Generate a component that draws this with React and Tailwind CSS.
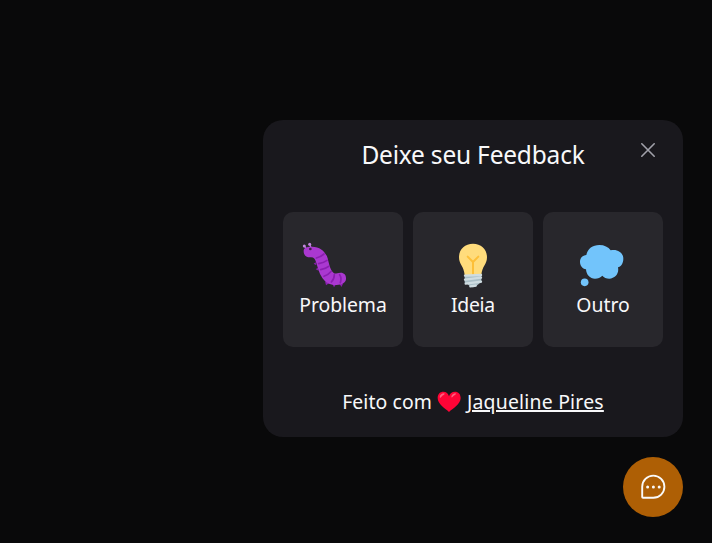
import React from "react";

function BugIcon() {
  return (
    <svg viewBox="15 15 150 150" className="-ml-[36px] h-[50px] w-[50px] shrink-0">
      <path d="M62 82l-6 4 8 5zM68 98l-6 5 9 4zM90 139l3 12 9-6zM112 146l5 11 7-10zM134 146l5 10 6-11z" fill="#8b1fb0" />
      <path d="M34 42L28 33M48 38L44 27" stroke="#b57bd0" strokeWidth="4" />
      <circle cx="28" cy="33" r="4.5" fill="#c386df" />
      <circle cx="44" cy="28" r="4.5" fill="#c386df" />
      <path d="M26 49C25 39 35 35 49 35C75 34 92 50 98 70C103 90 106 107 117 115C122 117 127 113 137 113C148 113 154 121 153 132C152 144 141 149 125 150C106 151 92 143 82 129C71 113 68 96 63 81C60 72 57 67 48 67C34 68 26 61 26 49Z" fill="#aa38d0" />
      <path d="M64 69C73 67 80 63 87 57M71 86C81 84 89 81 96 76M77 104C87 102 95 99 101 94M87 124C96 121 104 115 109 109M109 141C116 134 118 126 118 119M136 143C139 134 138 125 134 119" fill="none" stroke="#8b1fb0" strokeWidth="5" strokeLinecap="round" />
      <circle cx="46" cy="42" r="4" fill="#40204d" />
    </svg>
  );
}

function BulbIcon() {
  return (
    <svg viewBox="15 15 150 150" className="h-[50px] w-[50px] shrink-0">
      <path d="M90 26C65 26 48 43 48 67C48 88 63 94 65 120H115C117 94 132 88 132 67C132 43 115 26 90 26Z" fill="#ffdc7c" />
      <path d="M90 118V82M74 65L90 81L106 65" fill="none" stroke="#fdbf38" strokeWidth="6" strokeLinecap="round" strokeLinejoin="round" />
      <path d="M65 120H115V143C108 145 104 149 99 154C94 158 86 158 81 154C76 149 72 145 65 143Z" fill="#a9bec6" />
      <path d="M66 122L114 120M66 134L114 128M68 146L114 140M82 154L98 152" stroke="#cfdce1" strokeWidth="7" strokeLinecap="round" />
    </svg>
  );
}

function CloudIcon() {
  return (
    <svg viewBox="18 15 150 150" className="h-[50px] w-[50px] shrink-0">
      <path d="M43 60C47 41 62 30 82 30C97 30 109 36 116 46C135 41 154 52 154 71C154 86 146 95 138 97C142 116 129 131 112 131C103 131 96 128 91 122C85 128 78 131 69 131C54 131 43 120 42 103C31 101 24 92 24 81C24 69 32 61 43 60Z" fill="#72c4fb" />
      <circle cx="38" cy="142" r="11.5" fill="#72c4fb" />
    </svg>
  );
}

function HeartIcon() {
  return (
    <svg viewBox="304 34 75 66" className="mx-[5px] h-[22px] w-[25px] shrink-0">
      <path d="M340 97C329 86 306 74 306 55C306 42 314 36 323 36C332 36 338 41 340 50C342 41 349 36 358 36C368 36 375 43 375 55C375 74 351 86 340 97Z" fill="#ff0436" />
      <path d="M312 52C313 45 319 41 325 41C328 42 327 45 324 46C319 47 318 52 315 54C313 55 312 54 312 52ZM347 51C348 45 354 41 359 41C362 42 361 45 358 46C354 47 352 51 350 53C348 54 347 53 347 51Z" fill="#ff6180" />
    </svg>
  );
}

function FeedbackOption({ icon, children }) {
  return (
    <button className="flex h-[135px] w-[120px] flex-col items-center rounded-[10px] bg-[#28272c] pt-7">
      {icon}
      {children}
    </button>
  );
}

export default function App() {
  return (
    <div className="flex h-[543px] w-[712px] flex-col items-end overflow-hidden bg-[#09090a] pr-[29px] pt-[120px] font-['Noto_Sans',sans-serif] text-[#f8f8fa]">
      <section className="flex h-[317px] w-[420px] shrink-0 flex-col rounded-[20px] bg-[#19181d] px-5">
        <header className="grid h-[92px] grid-cols-[40px_1fr_40px] items-start">
          <h1 className="col-start-2 mt-[20px] whitespace-nowrap text-center text-[24.5px] leading-[30px] tracking-[-0.2px]">Deixe seu Feedback</h1>
          <button className="ml-[15px] mt-[20px] flex h-5 w-5 items-center justify-center text-[#a1a1aa]" aria-label="Fechar">
            <svg viewBox="0 0 20 20" className="h-5 w-5 shrink-0" fill="none" stroke="currentColor" strokeWidth="1.6" strokeLinecap="round">
              <path d="M3.8 3.8L16.2 16.2M16.2 3.8L3.8 16.2" />
            </svg>
          </button>
        </header>
        <div className="flex gap-[10px] text-[19.4px] leading-[30px]">
          <FeedbackOption icon={<BugIcon />}><span className="tracking-[-0.05px]">Problema</span></FeedbackOption>
          <FeedbackOption icon={<BulbIcon />}><span className="tracking-[-0.3px]">Ideia</span></FeedbackOption>
          <FeedbackOption icon={<CloudIcon />}><span>Outro</span></FeedbackOption>
        </div>
        <footer className="mt-10 flex h-[30px] items-center justify-center whitespace-nowrap text-[19.4px] leading-[30px]">
          <span className="tracking-[0.1px]">Feito com</span>
          <HeartIcon />
          <a href="#" className="tracking-[0.22px] underline decoration-[1.5px] underline-offset-1">Jaqueline Pires</a>
        </footer>
      </section>
      <button className="mt-5 flex h-[60px] w-[60px] shrink-0 items-center justify-center rounded-full bg-[#ae5f05]" aria-label="Feedback">
        <svg viewBox="0 0 30 30" className="h-[30px] w-[30px]" fill="none" stroke="#fafafa" strokeWidth="1.9" strokeLinejoin="round">
          <path d="M15.3 4A11.1 11.1 0 0 1 15.3 26.2H5A.8 .8 0 0 1 4.2 25.4V15.1A11.1 11.1 0 0 1 15.3 4Z" transform="translate(0 -0.4)" />
          <g fill="#fafafa" stroke="none">
            <circle cx="9.6" cy="15" r="1.5" />
            <circle cx="15.4" cy="15" r="1.5" />
            <circle cx="21.2" cy="15" r="1.5" />
          </g>
        </svg>
      </button>
    </div>
  );
}
